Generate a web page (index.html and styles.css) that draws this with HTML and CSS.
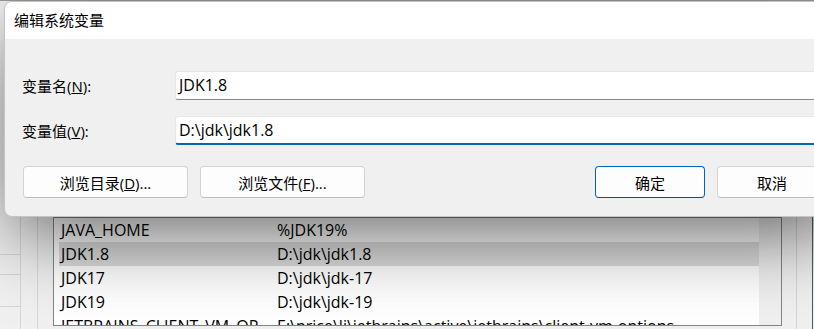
FILE: index.html
```html
<!DOCTYPE html>
<html lang="zh">
<head>
  <meta charset="UTF-8">
  <meta name="viewport" content="width=device-width, initial-scale=1.0">
  <title>编辑系统变量</title>
  <link rel="stylesheet" href="styles.css">
</head>
<body>
  <!-- 背后的环境变量窗口 -->
  <div class="env-window">
    <div class="side-pane">
      <div class="side-row"></div>
      <div class="side-row tall"></div>
      <div class="side-row"></div>
    </div>
    <div class="gutter"></div>

    <div class="var-list">
      <div class="var-rows">
        <div class="var-row"><span class="var-name">JAVA_HOME</span><span class="var-value">%JDK19%</span></div>
        <div class="var-row selected"><span class="var-name">JDK1.8</span><span class="var-value">D:\jdk\jdk1.8</span></div>
        <div class="var-row"><span class="var-name">JDK17</span><span class="var-value">D:\jdk\jdk-17</span></div>
        <div class="var-row"><span class="var-name">JDK19</span><span class="var-value">D:\jdk\jdk-19</span></div>
        <div class="var-row"><span class="var-name">JETBRAINS_CLIENT_VM_OP...</span><span class="var-value">E:\price\li\jetbrains\active\jetbrains\client-vm-options</span></div>
      </div>
      <div class="scrollbar"></div>
    </div>

    <div class="frame-right"></div>
    <div class="frame-edge"></div>
  </div>

  <!-- 编辑对话框 -->
  <div class="dialog">
    <div class="dialog-title">编辑系统变量</div>
    <div class="dialog-body">
      <div class="fields">
        <label class="field-label" for="varName">变量名(<u>N</u>):</label>
        <div class="field-input" id="varName">JDK1.8</div>
        <label class="field-label" for="varValue">变量值(<u>V</u>):</label>
        <div class="field-input focused" id="varValue">D:\jdk\jdk1.8</div>
      </div>

      <div class="button-row">
        <button class="btn btn-browse">浏览目录(<u>D</u>)...</button>
        <button class="btn btn-browse">浏览文件(<u>F</u>)...</button>
        <button class="btn btn-primary">确定</button>
        <button class="btn btn-cancel">取消</button>
      </div>
    </div>
  </div>
</body>
</html>
```

FILE: styles.css
```css
* {
  box-sizing: border-box;
}

html,
body {
  margin: 0;
  padding: 0;
}

body {
  position: relative;
  width: 814px;
  height: 329px;
  overflow: hidden;
  background-color: #f0f0f0;
  font-family: "Open Sans", "Noto Sans CJK SC", sans-serif;
  font-size: 15px;
  color: #000;
}

/* 背后窗口 */
.env-window {
  display: flex;
  height: 329px;
  border-top: 1px solid #9a9a9a;
}

.side-pane {
  width: 21px;
  border-right: 1px solid #d6d6d6;
  padding-top: 253px;
}

.side-row {
  height: 20px;
  border-top: 1px solid #d6d6d6;
}

.side-row.tall {
  height: 32px;
}

.gutter {
  width: 17px;
  border-right: 1px solid #d6d6d6;
}

.var-list {
  display: flex;
  width: 729px;
  height: 109px;
  margin-top: 216px;
  margin-left: 15px;
  border: 1px solid #848484;
  background-color: #fff;
  overflow: hidden;
}

.var-rows {
  flex: 1;
  padding-left: 5px;
  overflow: hidden;
}

.var-row {
  display: flex;
  height: 24px;
  line-height: 24px;
  font-size: 16px;
  white-space: nowrap;
}

.var-row.selected {
  background-color: #dedede;
}

.var-name {
  width: 218px;
  padding-left: 2px;
  flex-shrink: 0;
}

.scrollbar {
  width: 22px;
  background-color: #f0f0f0;
}

.frame-right {
  width: 15px;
  border-right: 1px solid #d4d4d4;
}

.frame-edge {
  width: 16px;
  border-right: 1px solid #2f6b6b;
}

/* 对话框 */
.dialog {
  position: absolute;
  left: 4px;
  top: 1px;
  width: 846px;
  height: 216px;
  border: 1px solid #c4c4c4;
  border-radius: 8px;
  background-color: #f0f0f0;
  box-shadow: 0 24px 80px -8px rgba(0, 0, 0, 0.62);
  overflow: hidden;
}

.dialog-title {
  height: 37px;
  line-height: 37px;
  padding-left: 9px;
  background-color: #fff;
  font-size: 15px;
}

.dialog-body {
  padding: 32px 22px 0 17px;
}

.fields {
  display: grid;
  grid-template-columns: 153px 1fr;
  row-gap: 16px;
  align-items: center;
}

.field-label {
  font-size: 15px;
}

.field-input {
  height: 29px;
  line-height: 27px;
  padding: 0 3px;
  background-color: #fff;
  border: 1px solid #e6e6e6;
  border-bottom: 1px solid #868686;
  border-radius: 3px;
  font-size: 16px;
}

.field-input.focused {
  line-height: 26px;
  border-bottom: 2px solid #0067c0;
}

.button-row {
  display: flex;
  gap: 12px;
  margin-top: 21px;
  padding-left: 1px;
}

.btn {
  height: 32px;
  padding: 0;
  background-color: #fdfdfd;
  border: 1px solid #d3d3d3;
  border-bottom-color: #bdbdbd;
  border-radius: 4px;
  font-family: inherit;
  font-size: 15px;
  color: #000;
}

.btn-browse {
  width: 165px;
}

.btn-primary {
  width: 110px;
  margin-left: auto;
  border-color: #0067c0;
  border-bottom-color: #00509a;
}

.btn-cancel {
  width: 110px;
}
```
